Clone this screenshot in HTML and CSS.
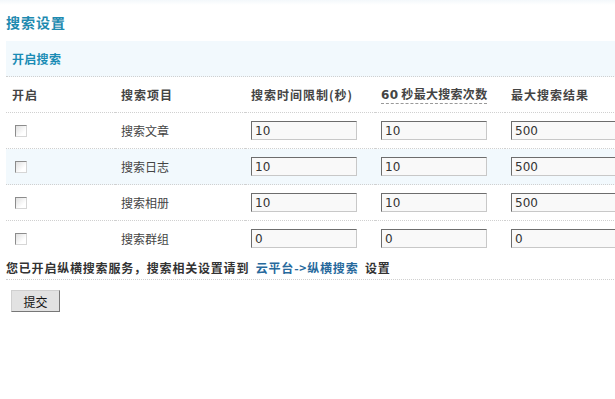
FILE: index.html
```html
<!DOCTYPE html>
<html lang="zh-CN">
<head>
<meta charset="utf-8">
<title>搜索设置</title>
<link rel="stylesheet" href="styles.css">
</head>
<body>
<div class="page">
  <h3 class="title">搜索设置</h3>
  <div class="wrap">
    <table class="tb">
      <colgroup>
        <col class="c1"><col class="c2"><col class="c3"><col class="c4"><col class="c5">
      </colgroup>
      <tr class="sect"><th colspan="5">开启搜索</th></tr>
      <tr class="head">
        <td>开启</td>
        <td>搜索项目</td>
        <td>搜索时间限制(秒)</td>
        <td><span class="tip"><span class="num">60</span> 秒最大搜索次数</span></td>
        <td>最大搜索结果</td>
      </tr>
      <tr>
        <td><input type="checkbox" class="ck"></td>
        <td class="name">搜索文章</td>
        <td><input type="text" class="txt" value="10"></td>
        <td><input type="text" class="txt" value="10"></td>
        <td><input type="text" class="txt" value="500"></td>
      </tr>
      <tr class="hover">
        <td><input type="checkbox" class="ck"></td>
        <td class="name">搜索日志</td>
        <td><input type="text" class="txt" value="10"></td>
        <td><input type="text" class="txt" value="10"></td>
        <td><input type="text" class="txt" value="500"></td>
      </tr>
      <tr>
        <td><input type="checkbox" class="ck"></td>
        <td class="name">搜索相册</td>
        <td><input type="text" class="txt" value="10"></td>
        <td><input type="text" class="txt" value="10"></td>
        <td><input type="text" class="txt" value="500"></td>
      </tr>
      <tr class="last">
        <td><input type="checkbox" class="ck"></td>
        <td class="name">搜索群组</td>
        <td><input type="text" class="txt" value="0"></td>
        <td><input type="text" class="txt" value="0"></td>
        <td><input type="text" class="txt" value="0"></td>
      </tr>
      <tr class="notice">
        <td colspan="5">您已开启纵横搜索服务，搜索相关设置请到 <a href="#" class="lnk">云平台-&gt;纵横搜索</a> 设置</td>
      </tr>
      <tr class="submit">
        <td colspan="5"><button type="button" class="btn">提交</button></td>
      </tr>
    </table>
  </div>
</div>
</body>
</html>
```
FILE: styles.css
```css
html, body {
  margin: 0;
  padding: 0;
  overflow: hidden;
}
body {
  background: linear-gradient(#f3f8fb, #ffffff 5px) no-repeat;
  font-family: "DejaVu Sans", "Noto Sans CJK SC", sans-serif;
  font-size: 12px;
  color: #333;
}
.page {
  padding: 0 0 0 6px;
}
.title {
  margin: 0;
  padding: 13px 0 0 0;
  height: 28px;
  line-height: 18px;
  font-size: 14px;
  letter-spacing: 1px;
  font-weight: bold;
  color: #1e8ab0;
  font-family: "Noto Sans CJK SC", sans-serif;
}
.wrap {
  width: 640px;
}
.tb {
  border-collapse: separate;
  border-spacing: 0;
  width: 630px;
  table-layout: fixed;
}
.c1 { width: 109px; }
.c2 { width: 130px; }
.c3 { width: 130px; }
.c4 { width: 130px; }
.c5 { width: 131px; }
.tb td, .tb th {
  height: 35px;
  padding: 0 0 0 6px;
  border-bottom: 1px dotted #d0d0d0;
  vertical-align: middle;
  text-align: left;
  white-space: nowrap;
  font-family: "Noto Sans CJK SC", sans-serif;
  line-height: 16px;
}
.sect th {
  background: #f2f9fd;
  color: #1a8cb5;
  font-weight: bold;
  letter-spacing: 0.3px;
}
.head td {
  font-weight: bold;
  color: #444;
  letter-spacing: 1px;
}
.tip {
  border-bottom: 1px dashed #999;
  padding-bottom: 1px;
  letter-spacing: 0.3px;
}
.num {
  font-family: "DejaVu Sans", sans-serif;
  font-size: 12px;
}
.hover td {
  background: #f2f9fd;
}
.name {
  color: #444;
}
.ck {
  appearance: none;
  -webkit-appearance: none;
  display: block;
  margin: 0 0 0 3px;
  width: 12px;
  height: 12px;
  box-sizing: border-box;
  border: 1px solid;
  border-color: #8c8c8c #d6d6d6 #d6d6d6 #8c8c8c;
  background: linear-gradient(135deg, #e0e0e0, #ffffff 70%);
}
.txt {
  display: block;
  margin: 0;
  width: 106px;
  height: 19px;
  box-sizing: border-box;
  padding: 0 3px;
  border: 1px solid;
  border-color: #6d6d6d #c8c8c8 #c8c8c8 #6d6d6d;
  background: #f9f9f9;
  font-family: "DejaVu Sans", sans-serif;
  font-size: 12px;
  color: #333;
}
.last td {
  border-bottom: none;
}
.notice td {
  height: 23px;
  padding: 0;
  font-weight: bold;
  letter-spacing: 0.8px;
  color: #333;
}
.lnk {
  color: #27699c;
  text-decoration: none;
  padding: 0 3px;
}
.submit td {
  border-bottom: none;
  height: auto;
  padding: 10px 0 0 5px;
}
.btn {
  width: 49px;
  height: 22px;
  padding: 0;
  margin: 0;
  border: 1px solid;
  border-color: #cfcfcf #777 #777 #cfcfcf;
  background: #e2e2e2;
  font-family: "Noto Sans CJK SC", sans-serif;
  font-size: 12px;
  color: #111;
}
```
